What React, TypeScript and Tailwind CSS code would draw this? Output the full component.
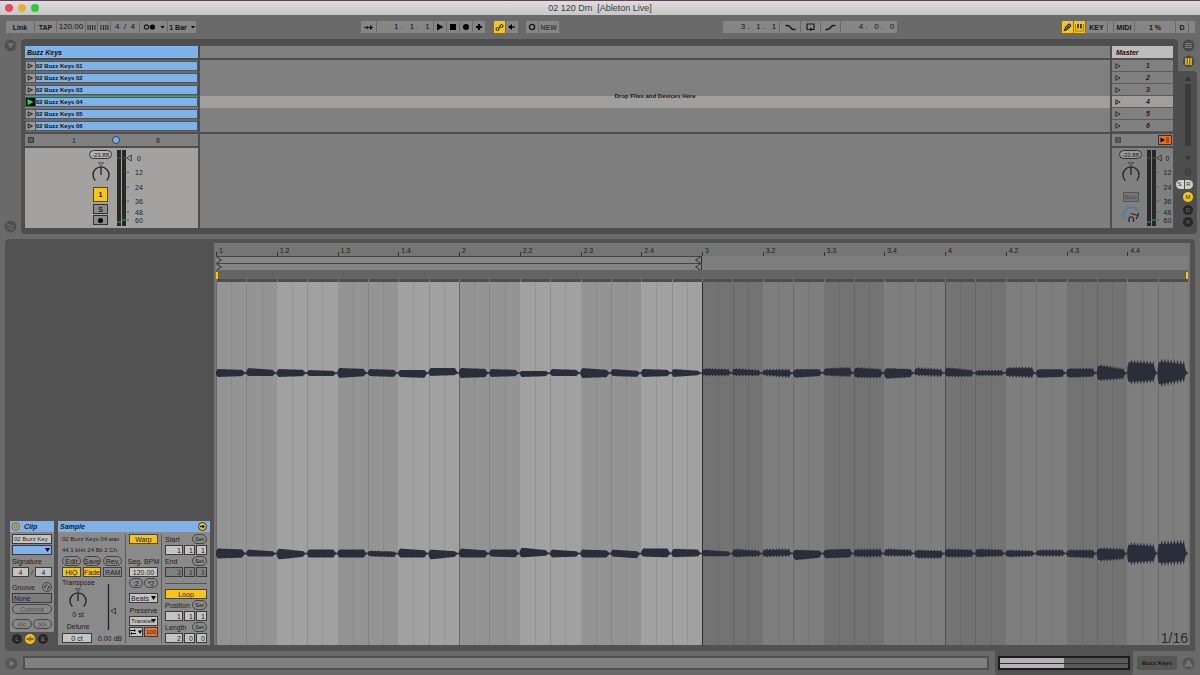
import type { ReactNode } from "react";
import clsx from "clsx";

const clips = ["01", "02", "03", "04", "05", "06"];
const PLAYING = 3;

const beatLabels = [
  "1", "1.2", "1.3", "1.4", "2", "2.2", "2.3", "2.4",
  "3", "3.2", "3.3", "3.4", "4", "4.2", "4.3", "4.4",
];

// one entry per eighth note: [up start, up end, down start, down end, ripple]
type Blob = [number, number, number, number, number];

const leftChannel: Blob[] = [
  [4, 3, 4, 3, 0], [5, 3, 3, 3, 0], [4, 3, 4, 3, 0], [3, 2, 3, 3, 0],
  [5, 4, 5, 3, 0], [4, 3, 3, 4, 0], [3, 3, 4, 5, 0], [5, 5, 3, 2, 0],
  [5, 4, 5, 4, 0], [4, 3, 4, 3, 0], [2, 2, 4, 3, 0], [4, 3, 3, 3, 0],
  [5, 3, 5, 4, 0], [4, 2, 3, 4, 0], [4, 3, 4, 3, 0], [4, 2, 4, 2, 0],
  [5, 4, 3, 3, 2], [5, 3, 3, 3, 2], [4, 4, 3, 5, 3], [4, 4, 5, 3, 1],
  [5, 6, 3, 4, 2], [6, 4, 5, 5, 2], [5, 4, 6, 4, 1], [6, 4, 3, 4, 3],
  [6, 3, 4, 4, 2], [3, 3, 3, 3, 2], [6, 6, 4, 5, 3], [4, 4, 5, 4, 1],
  [5, 5, 5, 4, 2], [9, 4, 8, 6, 3], [13, 11, 11, 9, 5], [14, 11, 14, 8, 6],
];

const rightChannel: Blob[] = [
  [5, 4, 5, 4, 0], [4, 2, 3, 3, 0], [5, 2, 6, 3, 0], [4, 4, 4, 4, 0],
  [4, 4, 4, 4, 0], [3, 2, 3, 4, 1], [5, 3, 4, 4, 0], [4, 2, 6, 3, 0],
  [5, 3, 4, 4, 0], [4, 4, 3, 4, 0], [6, 3, 4, 2, 0], [4, 2, 4, 3, 0],
  [4, 3, 4, 4, 0], [4, 2, 3, 5, 0], [5, 5, 3, 4, 0], [5, 4, 4, 3, 1],
  [4, 2, 3, 3, 1], [5, 3, 4, 3, 2], [5, 5, 4, 3, 3], [4, 3, 7, 4, 1],
  [4, 5, 5, 4, 1], [5, 5, 4, 4, 3], [5, 4, 3, 3, 2], [4, 3, 5, 5, 2],
  [5, 4, 4, 4, 2], [5, 4, 4, 3, 2], [4, 3, 4, 3, 2], [4, 4, 3, 3, 2],
  [4, 4, 4, 5, 2], [6, 5, 8, 6, 3], [11, 9, 11, 9, 5], [12, 13, 12, 10, 6],
];

function wavePath(blobs: Blob[], center: number) {
  const width = 972 / blobs.length;
  const top: string[] = [];
  const bottom: string[] = [];
  blobs.forEach(([u0, u1, d0, d1, ripple], i) => {
    for (let s = 0; s <= 29; s++) {
      const t = s / 29;
      let env = 1;
      if (t < 0.06) env = 0.4 + t * 10;
      if (t > 0.86) env = Math.max(0, (0.96 - t) / 0.1);
      const spike = s % 3 === 1 ? -ripple * 0.2 : ripple * 0.45;
      const up = Math.max(0.8, (u0 + (u1 - u0) * t - spike) * env);
      const down = Math.max(0.8, (d0 + (d1 - d0) * t - spike) * env);
      const x = (i * width + t * width).toFixed(1);
      top.push(`${x} ${(center - up).toFixed(1)}`);
      bottom.unshift(`${x} ${(center + down).toFixed(1)}`);
    }
  });
  return `M${top.join("L")}L${bottom.join("L")}Z`;
}

function Cell({ className, label, children }: { className?: string; label?: string; children?: ReactNode }) {
  return (
    <button
      aria-label={label}
      className={clsx("flex h-3 items-center justify-center whitespace-pre", className)}
    >
      {children}
    </button>
  );
}

function Toolbar() {
  return (
    <div className="flex h-6 items-center justify-between pr-[5px] pl-[6px] text-[7px] text-[#151515]">
      <div className="flex gap-px">
        <Cell className="w-7 bg-[#868686] font-bold">Link</Cell>
        <Cell className="w-[21px] bg-[#868686] font-bold">TAP</Cell>
        <Cell className="w-7 bg-[#868686] text-[8px]">120.00</Cell>
        <Cell className="w-[11px] bg-[#868686]" label="Nudge down">
          <svg width="9" height="7"><path d="M1 1v5M3.2 1v5M5.4 1v5M8 1v5" stroke="#222" strokeWidth="1" /></svg>
        </Cell>
        <Cell className="w-3 bg-[#868686]" label="Nudge up">
          <svg width="9" height="7"><path d="M1 1v5M3.6 1v5M5.8 1v5M8 1v5" stroke="#222" strokeWidth="1" /></svg>
        </Cell>
        <Cell className="w-7 bg-[#868686] text-[8px]">4  /  4</Cell>
        <Cell className="w-[27px] bg-[#868686]" label="Metronome">
          <svg width="22" height="8">
            <circle cx="3.5" cy="4" r="2.2" fill="none" stroke="#151515" strokeWidth="1.2" />
            <circle cx="9.5" cy="4" r="2.6" />
            <path d="M17.500 3h4l-2 2.500z" />
          </svg>
        </Cell>
        <Cell className="w-7 gap-1 bg-[#868686] font-bold">
          1 Bar
          <svg width="4" height="3"><path d="M0 0h4l-2 2.500z" /></svg>
        </Cell>
      </div>

      <div className="flex gap-px">
        <Cell className="w-[15px] bg-[#868686]" label="Follow">
          <svg width="9" height="7"><path d="M0 3.500h2M3 3.500h2M5 3.500h2" stroke="#151515" /><path d="M2.500 1.500l2 2-2 2zM6 1l3 2.500-3 2.500z" /></svg>
        </Cell>
        <Cell className="w-14 justify-end bg-[#868686] pr-[3px] text-[8px]">1 .   1 .   1</Cell>
        <Cell className="w-3 bg-[#868686]" label="Play">
          <svg width="8" height="8"><path d="M1 0.500l6.500 3.500-6.500 3.500z" /></svg>
        </Cell>
        <Cell className="w-3 bg-[#868686]" label="Stop">
          <svg width="6" height="6"><path d="M0 0h6v6h-6z" /></svg>
        </Cell>
        <Cell className="w-3 bg-[#868686]" label="Record">
          <svg width="8" height="8"><circle cx="4" cy="4" r="3" /></svg>
        </Cell>
        <Cell className="w-3 bg-[#868686]" label="Overdub">
          <svg width="8" height="8"><path d="M4 1v6M1 4h6" stroke="#000" strokeWidth="2.200" /></svg>
        </Cell>
        <Cell className="ml-2 w-[11px] bg-[#f5c518]" label="Automation arm">
          <svg width="9" height="9"><circle cx="2.500" cy="6" r="1.500" fill="none" stroke="#222" /><circle cx="6.500" cy="3" r="1.500" fill="none" stroke="#222" /><path d="M3.500 5.200l2-1.500" stroke="#222" /></svg>
        </Cell>
        <Cell className="w-3 bg-[#868686]" label="Re-enable automation">
          <svg width="7" height="6"><path d="M2 3h5" stroke="#000" strokeWidth="1.200" /><path d="M0 3l4-3v6z" /></svg>
        </Cell>
        <Cell className="ml-[7px] w-3 bg-[#868686]" label="Session record">
          <svg width="8" height="8"><circle cx="4" cy="4" r="2.600" fill="none" stroke="#151515" strokeWidth="1.400" /></svg>
        </Cell>
        <Cell className="w-5 bg-[#868686] font-bold text-[#3d3d3d]">NEW</Cell>
      </div>

      <div className="flex gap-px">
        <Cell className="w-14 justify-end bg-[#868686] pr-[3px] text-[8px]">3 .   1 .   1</Cell>
        <Cell className="w-5 bg-[#868686]" label="Punch in">
          <svg width="11" height="7"><path d="M0.500 1.500h2c3 0 3 4 6 4h2" fill="none" stroke="#1a1a1a" strokeWidth="1.300" /></svg>
        </Cell>
        <Cell className="w-[19px] bg-[#868686]" label="Loop">
          <svg width="9" height="8"><path d="M3.500 6.500h-2.500v-5.500h7v5.500h-2.500" fill="none" stroke="#1a1a1a" strokeWidth="1.200" /><path d="M4 4.500l3 2-3 1.500z" /></svg>
        </Cell>
        <Cell className="w-[19px] bg-[#868686]" label="Punch out">
          <svg width="11" height="7"><path d="M0.500 5.500h2c3 0 3-4 6-4h2" fill="none" stroke="#1a1a1a" strokeWidth="1.300" /></svg>
        </Cell>
        <Cell className="w-14 justify-end bg-[#868686] pr-[3px] text-[8px]">4 .   0 .   0</Cell>
      </div>

      <div className="flex gap-px">
        <Cell className="w-[11px] bg-[#f5c518]" label="Draw mode">
          <svg width="9" height="9"><path d="M1.500 7.500l1-3 3-3c1-0.800 2.600 0.600 1.800 1.800l-3 3z" fill="none" stroke="#222" strokeWidth="1.200" /><path d="M3.500 5.500l2.500-2.500" stroke="#222" /></svg>
        </Cell>
        <Cell className="w-[11px] bg-[#f5c518]" label="Computer MIDI keyboard">
          <svg width="9" height="9"><path d="M0.500 1v7h8v-7" fill="none" stroke="#a07c00" /><path d="M3 1v4.500M6 1v4.500" stroke="#222" strokeWidth="1.600" /></svg>
        </Cell>
        <Cell className="w-[21px] bg-[#868686] font-bold">KEY</Cell>
        <Cell className="w-[5px] bg-[#868686]" label="Key activity" />
        <Cell className="w-5 bg-[#868686] font-bold">MIDI</Cell>
        <Cell className="w-10 bg-[#868686] font-bold">1 %</Cell>
        <Cell className="w-3 bg-[#868686] font-bold">D</Cell>
        <Cell className="w-[6px] bg-[#868686]" label="MIDI activity" />
      </div>
    </div>
  );
}

function RoundIcon({ children, label, bg = "#505050" }: { children?: ReactNode; label: string; bg?: string }) {
  return (
    <button aria-label={label} className="block shrink-0">
      <svg width="13" height="13" viewBox="0 0 13 13">
        <circle cx="6.500" cy="6.500" r="6" fill={bg} />
        {children}
      </svg>
    </button>
  );
}

function Knob({ label }: { label: string }) {
  return (
    <svg role="img" aria-label={label} width="20" height="22" viewBox="0 0 20 22" className="block">
      <path d="M7.500 0.700h5l-2.500 3z" fill="none" stroke="#3a3a3a" strokeWidth="0.800" />
      <path d="M4.300 18.500A8 8 0 1 1 15.700 18.500" fill="none" stroke="#222" strokeWidth="1.300" />
      <path d="M10 5v8" stroke="#222" strokeWidth="1.300" />
    </svg>
  );
}

function MeterAndScale() {
  return (
    <>
      <svg width="9" height="76" viewBox="0 0 9 76" className="mt-0.5 shrink-0" role="img" aria-label="Level meter">
        <path d="M0 0h4v76h-4zM5 0h4v76h-4z" fill="#252827" />
        <path d="M0 8h9" stroke="#5c5c5c" strokeWidth="0.700" />
        <path d="M0 72h4M5 70h4" stroke="#2fa56c" strokeWidth="1.200" />
      </svg>
      <svg width="6" height="76" viewBox="0 0 6 76" className="mt-0.5 shrink-0" role="img" aria-label="Volume">
        <path d="M5.300 5v6l-4.500-3z" fill="none" stroke="#2a2a2a" strokeWidth="0.800" />
        <path d="M1 22.500h2M1 37h2M1 51h2M1 62h2M1 70h2" stroke="#555" />
      </svg>
      <div className="flex w-[14px] flex-col items-center pt-[3px] text-[7px] leading-none text-[#222]">
        <span className="flex h-[14px] items-center">0</span>
        <span className="flex h-[15px] items-center">12</span>
        <span className="flex h-[14px] items-center">24</span>
        <span className="flex h-[14px] items-center">36</span>
        <span className="flex h-2 items-center">48</span>
        <span className="flex h-2 items-center">60</span>
      </div>
    </>
  );
}

function Pill() {
  return (
    <div className="mb-[3px] flex h-[9px] w-[23px] items-center justify-center rounded-full border border-[#333] bg-white/20 text-[6px]">
      -23.88
    </div>
  );
}

function SessionView() {
  return (
    <section className="flex">
      <div className="flex w-[21px] shrink-0 flex-col items-center justify-between pb-px">
        <RoundIcon label="Show browser">
          <path d="M3 4h7l-3.500 5.500z" fill="#6f6f6f" />
        </RoundIcon>
        <RoundIcon label="Groove pool">
          <path d="M3 5.500q1.700-2 3.500 0t3.500 0M3 8.500q1.700-2 3.500 0t3.500 0" fill="none" stroke="#777" />
        </RoundIcon>
      </div>

      <div className="flex min-w-0 flex-1 gap-0.5 rounded-l-[4px] rounded-tr-[4px] bg-[#4e4e4e] pt-[7px] pr-[5px] pb-1.5 pl-1">
        {/* Track */}
        <div className="flex w-[173px] shrink-0 flex-col gap-0.5">
          <h2 className="flex h-3 items-center bg-[#7fb2e8] pl-0.5 text-[7px] font-bold text-[#111] italic">Buzz Keys</h2>
          <ul className="bg-[#555]">
            {clips.map((n, i) => (
              <li
                key={n}
                className={clsx("flex h-3 border-y py-px", i === PLAYING ? "border-[#4f9b86]" : "border-[#6c6c6c]")}
              >
                <button
                  aria-label={`Launch clip ${n}`}
                  className={clsx("ml-px flex w-[9px] items-center justify-center", i === PLAYING ? "bg-[#111]" : "bg-[#9b9b9b]")}
                >
                  <svg width="7" height="6" viewBox="0 0 7 6">
                    {i === PLAYING ? (
                      <path d="M0.500 0l6 3-6 3z" fill="#1fe03c" />
                    ) : (
                      <path d="M1 0.700l4.500 2.300-4.500 2.300z" fill="#777" stroke="#222" strokeWidth="0.900" />
                    )}
                  </svg>
                </button>
                <button className="mr-px ml-px flex flex-1 items-center bg-[#7fb2e8] text-[6px] font-bold text-[#111]">
                  02 Buzz Keys {n}
                </button>
              </li>
            ))}
          </ul>
          <div className="flex h-3 items-center bg-[#808080] text-[7px] text-[#222]">
            <button aria-label="Stop clip" className="ml-[3px] h-[6px] w-[6px] border border-[#3c3c3c] bg-[#5a5a5a]" />
            <div className="ml-[19px] grid grid-cols-3">
              <span className="flex w-[42px] items-center justify-center">1</span>
              <span className="flex w-[42px] items-center justify-center">
                <span className="h-2 w-2 rounded-full border border-[#28445f] bg-[#7fb2e8]" />
              </span>
              <span className="flex w-[42px] items-center justify-center">8</span>
            </div>
          </div>
          <div className="flex h-20 bg-[#a3a2a1] pl-16">
            <div className="mr-[5px] flex w-[23px] flex-col items-center pt-0.5 text-[#1a1a1a]">
              <Pill />
              <Knob label="Pan" />
              <button className="mt-[3px] flex h-[15px] w-[15px] items-center justify-center border border-[#444] bg-[#f5c518] text-[7px] font-bold">1</button>
              <button className="mt-0.5 flex h-[10px] w-[15px] items-center justify-center border border-[#333] bg-[#8c8c8c] text-[7px] font-bold">S</button>
              <button aria-label="Arm" className="mt-px flex h-[10px] w-[15px] items-center justify-center border border-[#333] bg-[#8c8c8c]">
                <span className="h-[5px] w-[5px] rounded-full bg-black" />
              </button>
            </div>
            <MeterAndScale />
          </div>
        </div>

        {/* Drop area */}
        <div className="flex min-w-0 flex-1 flex-col gap-0.5">
          <div className="h-3 bg-[#808080]" />
          <div className="relative h-[72px] bg-[#808080] pt-9">
            <div className="h-3 bg-[#a09f9e]" />
            <p className="absolute inset-x-0 top-8 text-center text-[6px] leading-[8px] font-bold text-[#1a1a1a]">
              Drop Files and Devices Here
            </p>
          </div>
          <div className="flex-1 bg-[#7f7f7f]" />
        </div>

        {/* Master */}
        <div className="flex w-[61px] shrink-0 flex-col gap-0.5">
          <h2 className="flex h-3 items-center bg-[#bdbdbd] pl-1 text-[7px] font-bold text-[#111] italic">Master</h2>
          <ul>
            {clips.map((n, i) => (
              <li
                key={n}
                className={clsx("flex h-3 items-center border-b border-[#5a5a5a] text-[7px] font-bold text-[#222] italic", i === PLAYING ? "bg-[#a09f9e]" : "bg-[#808080]")}
              >
                <button aria-label={`Launch scene ${i + 1}`} className="ml-[3px]">
                  <svg width="6" height="6"><path d="M0.700 0.700l4.500 2.300-4.500 2.300z" fill="#777" stroke="#333" strokeWidth="0.900" /></svg>
                </button>
                <span className="ml-[25px]">{i + 1}</span>
              </li>
            ))}
          </ul>
          <div className="flex h-3 items-center justify-between bg-[#808080] pr-px pl-[3px]">
            <button aria-label="Stop all clips" className="h-[6px] w-[6px] border border-[#4c4c4c] bg-[#5a5a5a]" />
            <button aria-label="Back to arrangement" className="flex h-[10px] w-[14px] items-center justify-center border border-[#333] bg-[#ee6c1c]">
              <svg width="10" height="6"><path d="M0.500 0.500l4.500 2.500-4.500 2.500z" /><path d="M6 1h3M6 3h3M6 5h3" stroke="#702800" /></svg>
            </button>
          </div>
          <div className="flex h-20 bg-[#808080] pl-[7px]">
            <div className="mr-[5px] flex w-[23px] flex-col items-center pt-0.5 text-[#1a1a1a]">
              <Pill />
              <Knob label="Pan" />
              <button className="mt-2 flex h-[10px] w-4 items-center justify-center border border-[#555] bg-[#747474] text-[6px] text-[#444]">Solo</button>
              <svg width="20" height="20" viewBox="0 0 20 20" role="img" aria-label="Cue volume" className="mt-0.5">
                <path d="M4.500 15.500A7.500 7.500 0 1 1 17.300 8" fill="none" stroke="#3d7fb5" strokeWidth="1.400" />
                <path d="M10 9.500l7 2M17.500 9q0 3.500-2.500 6" stroke="#222" strokeWidth="1.200" fill="none" />
                <path d="M8 18v-3a2 2 0 0 1 4.500 0v3" fill="none" stroke="#222" strokeWidth="1.200" />
              </svg>
            </div>
            <MeterAndScale />
          </div>
        </div>
      </div>

      {/* Right rail */}
      <div className="flex w-[22px] shrink-0 flex-col pr-[3px]">
        <div className="flex h-8 flex-col items-center gap-[3px] pl-px">
          <RoundIcon label="Arrangement view" bg="#4a4a4a">
            <path d="M3 4.500h7M3 6.500h7M3 8.500h7" stroke="#7d7d7d" />
          </RoundIcon>
          <RoundIcon label="Session view" bg="#4a4a4a">
            <path d="M4 3v7M6.500 3v7M9 3v7" stroke="#f0c41c" strokeWidth="1.500" />
          </RoundIcon>
        </div>
        <div className="flex flex-1 flex-col items-center rounded-r-[4px] bg-[#4e4e4e] pt-[5px] pl-px">
          <svg width="6" height="5"><path d="M0 5h6l-3-5z" fill="#333" /></svg>
          <div className="mt-[3px] h-[62px] w-[6px] bg-[#3a3a3a]" />
          <svg width="6" height="5" className="mt-[10px]"><path d="M0 0h6l-3 5z" fill="#3a3a3a" /></svg>
          <div className="mt-[7px] h-2 w-2 rounded-full bg-[#424242]" />
          <div className="mt-1 -ml-2 flex gap-px text-[6px] leading-[9px] text-[#333]">
            <button className="w-2 rounded-l-full bg-[#d0d0d0]">S</button>
            <button className="w-2 rounded-r-full bg-[#d0d0d0]">R</button>
          </div>
          <button className="mt-[3px] h-[10px] w-[10px] rounded-full bg-[#f5c518] text-[6px] leading-[10px] text-[#222]">M</button>
          <button className="mt-[3px] h-[10px] w-[10px] rounded-full bg-[#262626] text-[6px] leading-[10px] text-[#777]">D</button>
          <button className="mt-0.5 h-[10px] w-[10px] rounded-full bg-[#262626] text-[6px] leading-[10px] text-[#777]">X</button>
        </div>
      </div>
    </section>
  );
}

function Field({ label, value, className }: { label: string; value: string; className?: string }) {
  return (
    <input
      aria-label={label}
      defaultValue={value}
      className={clsx("h-[10px] min-w-0 border border-[#3a3a3a] leading-none", className)}
    />
  );
}

function Chooser({ label, value, className }: { label: string; value: string; className?: string }) {
  return (
    <div className="relative h-[10px]">
      <select
        aria-label={label}
        className={clsx("block h-[10px] w-full appearance-none border border-[#3a3a3a] pr-1 pl-px leading-none", className)}
      >
        <option>{value}</option>
      </select>
      <svg width="5" height="4" className="pointer-events-none absolute top-[3px] right-0.5"><path d="M0 0h5l-2.500 4z" /></svg>
    </div>
  );
}

function Round({ children, label, className }: { children: ReactNode; label?: string; className?: string }) {
  return (
    <button
      aria-label={label}
      className={clsx("flex h-[10px] items-center justify-center rounded-full border border-[#444]", className)}
    >
      {children}
    </button>
  );
}

function Toggle({ children, on = false }: { children: ReactNode; on?: boolean }) {
  return (
    <button
      aria-pressed={on}
      className={clsx("flex h-[10px] items-center justify-center border border-[#444]", on ? "bg-[#f5c518]" : "bg-[#8c8c8c]")}
    >
      {children}
    </button>
  );
}

function Position({ label, values, muted = false }: { label: string; values: string[]; muted?: boolean }) {
  const style = clsx("pr-px text-right", muted ? "bg-[#808080] text-[#333]" : "bg-[#c4c4c4]");
  return (
    <>
      <div className="flex h-[10px] items-center justify-between">
        <span>{label}</span>
        <Round className="w-[15px] text-[6px]" label={`Set ${label}`}>Set</Round>
      </div>
      <div className="flex gap-px">
        <Field label={`${label} bars`} value={values[0]} className={clsx("w-[18px]", style)} />
        <Field label={`${label} beats`} value={values[1]} className={clsx("w-[11px]", style)} />
        <Field label={`${label} sixteenths`} value={values[2]} className={clsx("w-[11px]", style)} />
      </div>
    </>
  );
}

function ClipBox() {
  return (
    <div className="flex w-11 shrink-0 flex-col">
      <div className="bg-[#878787] pb-[3px]">
        <h3 className="flex h-[11px] items-center gap-1 bg-[#7fb2e8] pl-px font-bold italic">
          <svg width="9" height="9"><circle cx="4.500" cy="4.500" r="3.800" fill="#c5b36a" stroke="#5a5230" strokeWidth="0.800" /><circle cx="4.500" cy="4.500" r="1.600" fill="none" stroke="#5a5230" strokeWidth="0.700" /></svg>
          Clip
        </h3>
        <div className="flex flex-col gap-px px-0.5 pt-0.5">
          <Field label="Clip name" value="02 Buzz Key" className="w-full bg-[#c4c4c4] pl-px text-[6px]" />
          <Chooser label="Clip color" value="" className="bg-[#7fb2e8]" />
          <span className="flex h-[10px] items-center">Signature</span>
          <div className="flex items-center justify-between">
            <Field label="Signature numerator" value="4" className="w-[17px] bg-[#c4c4c4] text-center" />
            /
            <Field label="Signature denominator" value="4" className="w-[17px] bg-[#c4c4c4] text-center" />
          </div>
          <div className="mt-1 flex h-[10px] items-center justify-between">
            Groove
            <Round className="w-[10px]" label="Hot-swap groove">
              <svg width="6" height="6"><path d="M1 4a2.200 2.200 0 0 1 2-3M5 2a2.200 2.200 0 0 1-2 3" fill="none" stroke="#222" /></svg>
            </Round>
          </div>
          <Field label="Groove" value="None" className="w-full bg-[#7c7c7c] pl-px" />
          <Round className="text-[#555]">Commit</Round>
          <div className="mt-1 grid grid-cols-2 gap-px text-[#444]">
            <Round label="Nudge back">&lt;&lt;</Round>
            <Round label="Nudge forward">&gt;&gt;</Round>
          </div>
        </div>
      </div>
      <div className="flex h-[13px] items-center gap-[3px] pl-0.5">
        <button className="h-[10px] w-[10px] rounded-full bg-[#262626] text-[6px] leading-[10px] text-[#888]">L</button>
        <button aria-label="Sample box" className="flex h-[10px] w-[10px] items-center justify-center rounded-full bg-[#f5c518]">
          <svg width="8" height="6"><path d="M0 3h8M2 1.500v3M4 0v6M6 1.500v3" stroke="#5e4c06" strokeWidth="0.900" /></svg>
        </button>
        <button className="h-[10px] w-[10px] rounded-full bg-[#262626] text-[6px] leading-[10px] text-[#888]">E</button>
      </div>
    </div>
  );
}

function SampleBox() {
  return (
    <div className="w-[152px] shrink-0 bg-[#8a8a8a]">
      <h3 className="flex h-[11px] items-center justify-between bg-[#7fb2e8] pr-[3px] pl-0.5 font-bold italic">
        Sample
        <svg width="9" height="9"><circle cx="4.500" cy="4.500" r="4" fill="#f5c518" stroke="#222" strokeWidth="0.900" /><path d="M2 4.500h3" stroke="#111" strokeWidth="1.200" /><path d="M4.500 2.500l2.500 2-2.500 2z" /></svg>
      </h3>
      <div className="flex pt-0.5 pb-0.5">
        <div className="flex w-[68px] flex-col gap-px pr-[3px] pl-1">
          <p className="text-[6px] leading-[10px] whitespace-nowrap">02 Buzz Keys 04.wav</p>
          <p className="text-[6px] leading-[10px] whitespace-nowrap">44.1 kHz 24 Bit 2 Ch</p>
          <div className="grid grid-cols-3 gap-0.5">
            <Round>Edit</Round>
            <Round>Save</Round>
            <Round>Rev.</Round>
          </div>
          <div className="grid grid-cols-3 gap-0.5">
            <Toggle on>HiQ</Toggle>
            <Toggle on>Fade</Toggle>
            <Toggle>RAM</Toggle>
          </div>
          <div className="flex justify-between pr-[5px]">
            <div className="flex w-8 flex-col items-center">
              <span className="h-[10px] self-start leading-[10px]">Transpose</span>
              <Knob label="Transpose" />
              <span className="h-[10px] leading-[10px]">0 st</span>
              <span className="mt-0.5 h-[10px] leading-[10px]">Detune</span>
            </div>
            <svg width="10" height="48" viewBox="0 0 10 48" role="img" aria-label="Clip gain" className="mt-1">
              <path d="M1.500 2v46" stroke="#222" strokeWidth="1.300" />
              <path d="M8.500 26v6l-4.500-3z" fill="none" stroke="#333" strokeWidth="0.900" />
            </svg>
          </div>
          <div className="flex items-center justify-between">
            <Field label="Detune" value="0 ct" className="w-[30px] bg-[#c4c4c4] text-center" />
            <span className="whitespace-nowrap">0.00 dB</span>
          </div>
        </div>

        <div className="flex w-[37px] flex-col gap-px border-x border-[#5c5c5c] px-[3px]">
          <Toggle on>Warp</Toggle>
          <span className="mt-[11px] flex h-[10px] items-center justify-center whitespace-nowrap">Seg. BPM</span>
          <Field label="Segment BPM" value="120.00" className="w-full bg-[#c4c4c4] text-center" />
          <div className="grid grid-cols-2 gap-px">
            <Round>:2</Round>
            <Round>*2</Round>
          </div>
          <div className="pt-1">
            <Chooser label="Warp mode" value="Beats" className="bg-[#c4c4c4]" />
          </div>
          <span className="mt-px flex h-[10px] items-center justify-center">Preserve</span>
          <Chooser label="Preserve" value="Transients" className="bg-[#c4c4c4] text-[6px]" />
          <div className="flex gap-px">
            <button aria-label="Transient loop mode" className="flex h-[10px] w-[14px] items-center justify-center border border-[#3a3a3a] bg-[#c4c4c4]">
              <svg width="12" height="6"><path d="M0 1.500h5M1 4.500h5" stroke="#111" /><path d="M4 0l2 1.500-2 1.500zM2 3l-2 1.500 2 1.500zM8 1.500h4l-2 3.500z" /></svg>
            </button>
            <Field label="Transient envelope" value="100" className="w-[14px] bg-[#e8743a] text-center text-[6px]" />
          </div>
        </div>

        <div className="flex flex-1 flex-col gap-px px-[3px]">
          <Position label="Start" values={["1", "1", "1"]} />
          <Position label="End" values={["3", "1", "1"]} muted />
          <hr className="mt-[5px] mb-1 border-[#555]" />
          <Toggle on>Loop</Toggle>
          <Position label="Position" values={["1", "1", "1"]} />
          <Position label="Length" values={["2", "0", "0"]} />
        </div>
      </div>
    </div>
  );
}

function LoopBrace() {
  return (
    <div className="flex h-[7px] items-center justify-between border-t border-[#444] bg-[#858585]">
      <svg width="6" height="6"><path d="M0.500 0l5 3-5 3" fill="none" stroke="#333" /></svg>
      <svg width="6" height="6"><path d="M5.500 0l-5 3 5 3" fill="none" stroke="#333" /></svg>
    </div>
  );
}

function SampleDisplay() {
  return (
    <div className="mt-1 mr-[5px] mb-1.5 flex min-w-0 flex-1 flex-col bg-[#757575] px-0.5">
      <div className="grid h-[13px] grid-cols-16 items-end">
        {beatLabels.map((b) => (
          <span key={b} className="flex h-[9px] items-start text-[7px] leading-[7px] text-[#1c1c1c]">
            <span className="mt-[5px] mr-0.5 h-1 w-px bg-[#333]" />
            {b}
          </span>
        ))}
      </div>
      <div className="h-[14px] bg-[#7e7e7e]">
        <div className="w-1/2 border-r border-[#333]">
          <LoopBrace />
          <LoopBrace />
        </div>
      </div>
      <div className="flex h-[9px] items-end justify-between bg-[#656565]">
        <span className="h-[7px] w-[3px] border-r border-[#7a5f00] bg-[#f5c518]" />
        <span className="h-[7px] w-[3px] border-l border-[#7a5f00] bg-[#f5c518]" />
      </div>
      <div className="grid h-[3px] grid-cols-32 bg-[#4e4e4e]">
        {Array.from({ length: 32 }, (_, i) => (
          <span key={i} className="border-l border-[#7c7c7c]" />
        ))}
      </div>

      <div className="relative grid flex-1 grid-cols-16">
        {beatLabels.map((b, i) => (
          <div
            key={b}
            className={clsx(
              "grid grid-cols-4",
              i < 8 && (i % 2 ? "bg-[#a1a1a1]" : "bg-[#949494]"),
              i >= 8 && (i % 2 ? "bg-[#7e7e7e]" : "bg-[#737373]"),
              i === 8 && "border-l border-[#2c2c2c]",
            )}
          >
            <span className={clsx(i % 4 === 0 && i !== 8 && "border-l border-black/30")} />
            <span className="border-l border-black/8" />
            <span className="border-l border-black/12" />
            <span className="border-l border-black/8" />
          </div>
        ))}
        <svg
          role="img"
          aria-label="Sample waveform"
          viewBox="0 0 972 363"
          preserveAspectRatio="none"
          className="absolute inset-0 h-full w-full"
        >
          <path d={wavePath(leftChannel, 91)} fill="#2a2d3a" />
          <path d={wavePath(rightChannel, 271.5)} fill="#2a2d3a" />
        </svg>
        <span className="absolute right-0 bottom-0 text-[14px] leading-none text-[#2a2a2a]">1/16</span>
      </div>
    </div>
  );
}

export default function App() {
  return (
    <div className="flex min-h-screen flex-col bg-[#6a6a6a] font-['Liberation_Sans',Arial,sans-serif] leading-none text-[#1a1a1a]">
      {/* Title bar */}
      <header className="relative flex h-[15px] items-center justify-center border-t border-[#5b4558] bg-linear-to-b from-[#dedede] to-[#c6c6c6]">
        <div className="absolute inset-y-0 left-[5px] flex items-center gap-[5px]">
          <button aria-label="Close" className="h-2 w-2 rounded-full bg-[#e8485a]" />
          <button aria-label="Minimize" className="h-2 w-2 rounded-full bg-[#e6b032]" />
          <button aria-label="Zoom" className="h-2 w-2 rounded-full bg-[#2fc93c]" />
        </div>
        <h1 className="text-[9px] whitespace-pre text-[#3c3c3c]">02 120 Dm  [Ableton Live]</h1>
      </header>

      <Toolbar />
      <SessionView />

      {/* Clip detail */}
      <section className="mx-[5px] mt-[5px] flex flex-1 rounded-t-[4px] rounded-bl-[4px] bg-[#525252]">
        <div className="flex w-[209px] shrink-0 items-end gap-1 pb-1.5 pl-[5px] text-[7px] text-[#1c1c1c]">
          <ClipBox />
          <SampleBox />
        </div>
        <SampleDisplay />
      </section>

      {/* Status bar */}
      <footer className="flex h-6 items-center pr-[5px] pl-[5px]">
        <RoundIcon label="Show info" bg="#555555">
          <path d="M4.500 3.500l5 3-5 3z" fill="#7d7d7d" />
        </RoundIcon>
        <input aria-label="Status" readOnly className="ml-[5px] h-[14px] min-w-0 flex-1 border-2 border-[#505050] bg-[#808080]" />
        <div className="ml-1.5 flex h-full w-[138px] items-start rounded-b-[4px] bg-[#525252] px-[3px] pt-[5px]">
          <div className="flex h-[14px] w-full flex-col justify-center gap-px border-2 border-[#1c1c1c] bg-[#2e2e2e]">
            <div className="flex-1 bg-[#5a5a5a]"><div className="h-full w-1/2 bg-[#b5b3b5]" /></div>
            <div className="flex-1 bg-[#5a5a5a]"><div className="h-full w-1/2 bg-[#b5b3b5]" /></div>
          </div>
        </div>
        <button className="ml-1 h-[14px] w-10 rounded-[2px] bg-[#565656] text-[6px] font-bold text-[#161616]">Buzz Keys</button>
        <div className="ml-[5px]">
          <RoundIcon label="Show detail view" bg="#555555">
            <path d="M6.500 3l3.500 6h-7z" fill="#6f6f6f" stroke="#888" strokeWidth="0.700" />
          </RoundIcon>
        </div>
      </footer>
    </div>
  );
}
